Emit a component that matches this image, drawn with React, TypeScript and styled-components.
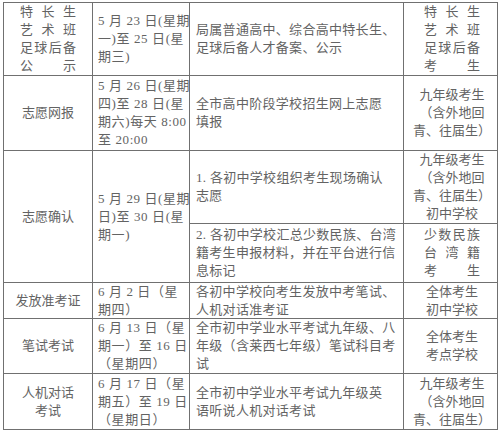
import React from "react";
import styled, { createGlobalStyle } from "styled-components";

const Global = createGlobalStyle`
  html, body { margin: 0; padding: 0; background: #ffffff; }
  body {
    font-family: "Liberation Serif", "Noto Sans CJK SC", serif;
    color: #636363;
  }
`;

const Table = styled.div`
  display: grid;
  grid-template-columns: 89px 97px 214px 94px;
  grid-template-rows: 73px 75px 73px 59px 36px 55px 56px;
  margin: 2px 0 0 3px;
  width: max-content;
  border-top: 1px solid #707070;
  border-left: 1px solid #707070;
`;

type CellProps = {
  $align?: "left" | "center";
  $rows?: number;
  $padL?: number;
  $spacing?: number;
};

const Cell = styled.div<CellProps>`
  box-sizing: border-box;
  border-right: 1px solid #707070;
  border-bottom: 1px solid #707070;
  grid-row: span ${(p) => p.$rows ?? 1};
  display: flex;
  flex-direction: column;
  justify-content: center;
  align-items: ${(p) => (p.$align === "left" ? "flex-start" : "center")};
  padding-left: ${(p) => p.$padL ?? 0}px;
  font-size: 13px;
  line-height: 18px;
  letter-spacing: ${(p) => p.$spacing ?? 0}px;
  white-space: nowrap;
  overflow: visible;
`;

const Lines = styled.div<{ $width?: number; $center?: boolean }>`
  display: flex;
  flex-direction: column;
  width: ${(p) => (p.$width ? `${p.$width}px` : "auto")};
  align-items: ${(p) => (p.$center ? "center" : "stretch")};
`;

const Line = styled.div`
  display: block;
`;

const SpreadLine = styled.div`
  display: flex;
  justify-content: space-between;
`;

const Spread: React.FC<{ lines: string[]; width: number }> = ({ lines, width }) => (
  <Lines $width={width}>
    {lines.map((l, i) => (
      <SpreadLine key={i}>
        {Array.from(l).map((c, j) => (
          <span key={j}>{c}</span>
        ))}
      </SpreadLine>
    ))}
  </Lines>
);

const Text: React.FC<{ lines: string[]; center?: boolean }> = ({ lines, center }) => (
  <Lines $center={center}>
    {lines.map((l, i) => (
      <Line key={i}>{l}</Line>
    ))}
  </Lines>
);

const Name: React.FC<{ children: React.ReactNode; rows?: number }> = ({ children, rows }) => (
  <Cell $rows={rows}>{children}</Cell>
);

const DateCell: React.FC<{ lines: string[]; rows?: number }> = ({ lines, rows }) => (
  <Cell $rows={rows} $align="left" $padL={5} $spacing={0.6}>
    <Text lines={lines} />
  </Cell>
);

const Desc: React.FC<{ lines: string[] }> = ({ lines }) => (
  <Cell $align="left" $padL={6} $spacing={0.3}>
    <Text lines={lines} />
  </Cell>
);

const Who: React.FC<{ children: React.ReactNode }> = ({ children }) => (
  <Cell $padL={3}>{children}</Cell>
);

export default function App() {
  return (
    <>
      <Global />
      <Table>
        {/* Row 1 */}
        <Name>
          <Spread width={56} lines={["特长生", "艺术班", "足球后备", "公示"]} />
        </Name>
        <DateCell lines={["5 月 23 日(星期", "一)至 25 日(星", "期三)"]} />
        <Desc lines={["局属普通高中、综合高中特长生、", "足球后备人才备案、公示"]} />
        <Who>
          <Spread width={56} lines={["特长生", "艺术班", "足球后备", "考生"]} />
        </Who>

        {/* Row 2 */}
        <Name>
          <Text lines={["志愿网报"]} />
        </Name>
        <DateCell lines={["5 月 26 日(星期", "四)至 28 日(星", "期六)每天 8:00", "至 20:00"]} />
        <Desc lines={["全市高中阶段学校招生网上志愿", "填报"]} />
        <Who>
          <Text center lines={["九年级考生", "（含外地回", "青、往届生）"]} />
        </Who>

        {/* Row 3 */}
        <Name rows={2}>
          <Text lines={["志愿确认"]} />
        </Name>
        <DateCell rows={2} lines={["5 月 29 日(星期", "日)至 30 日(星", "期一)"]} />
        <Desc lines={["1. 各初中学校组织考生现场确认", "志愿"]} />
        <Who>
          <Text center lines={["九年级考生", "（含外地回", "青、往届生）", "初中学校"]} />
        </Who>
        <Desc lines={["2. 各初中学校汇总少数民族、台湾", "籍考生申报材料，并在平台进行信", "息标记"]} />
        <Who>
          <Spread width={56} lines={["少数民族", "台湾籍", "考生"]} />
        </Who>

        {/* Row 4 */}
        <Name>
          <Text lines={["发放准考证"]} />
        </Name>
        <DateCell lines={["6 月 2 日（星", "期四）"]} />
        <Desc lines={["各初中学校向考生发放中考笔试、", "人机对话准考证"]} />
        <Who>
          <Text center lines={["全体考生", "初中学校"]} />
        </Who>

        {/* Row 5 */}
        <Name>
          <Text lines={["笔试考试"]} />
        </Name>
        <DateCell lines={["6 月 13 日（星", "期一）至 16 日", "（星期四）"]} />
        <Desc lines={["全市初中学业水平考试九年级、八", "年级（含莱西七年级）笔试科目考", "试"]} />
        <Who>
          <Text center lines={["全体考生", "考点学校"]} />
        </Who>

        {/* Row 6 */}
        <Name>
          <Text center lines={["人机对话", "考试"]} />
        </Name>
        <DateCell lines={["6 月 17 日（星", "期五）至 19 日", "（星期日）"]} />
        <Desc lines={["全市初中学业水平考试九年级英", "语听说人机对话考试"]} />
        <Who>
          <Text center lines={["九年级考生", "（含外地回", "青、往届生）"]} />
        </Who>
      </Table>
    </>
  );
}
